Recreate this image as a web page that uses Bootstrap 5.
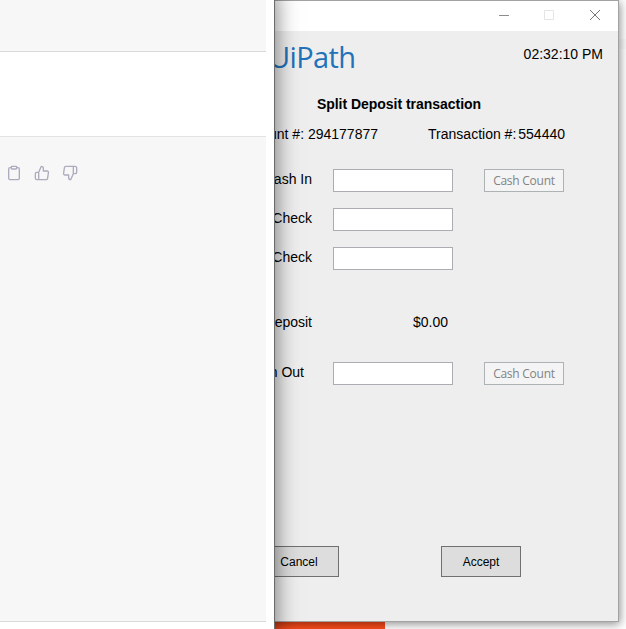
<!DOCTYPE html>
<html lang="en">
<head>
<meta charset="utf-8">
<meta name="viewport" content="width=device-width, initial-scale=1">
<title>UiPath - Split Deposit transaction</title>
<link href="https://cdn.jsdelivr.net/npm/bootstrap@5.3.0/dist/css/bootstrap.min.css" rel="stylesheet">
<style>
body{font:14px/20px "Liberation Sans",Arial,sans-serif;color:#000;background:#fff}
.desktop{width:626px;height:629px}
.desk-line{left:600px;top:39px;width:26px;height:10px;background:#fafafa}
.orange-strip{left:0;top:600px;width:385px;height:29px;background:#fc4c1b}
/* transaction window */
.teller{left:180px;top:0;width:439px;height:622px;border:1px solid #a2a2a2;background:#eee;box-shadow:1px 2px 9px rgba(0,0,0,.45)}
.title-strip{height:30px;padding:0 17px 2px 0;gap:33px}
.close-icon{margin-left:1px}
.brand{font:400 29px/38px "Open Sans","Noto Sans",sans-serif;color:#2272b9;letter-spacing:-.6px}
.head-row{height:53px;padding:7px 15px 0 0}
.head-row .brand{width:174.5px}
.clock{padding-top:6px}
.heading{height:40px;padding:10px 1px 0 0;letter-spacing:-.03px}
.acct-row{height:45px}
.acct-row .acct{width:197px}
.acct-row .trans{width:187px;gap:2px}
.field-row{height:23px}
.field-row+.field-row{margin-top:16px}
.lbl{width:131px;line-height:20px;margin-right:21px}
.lbl-out{width:123px;margin-right:29px}
.teller .form-control{width:120px;height:23px;padding:0;border:1px solid #abadb3;border-radius:0;background:#fff}
.count-btn,.count-btn:disabled{width:80px;height:23px;margin-left:31px;padding:0;border:1px solid #adb2b5;border-radius:0;background:#f4f4f4;color:#838383;opacity:1;font:12px/22px "Open Sans","Noto Sans",sans-serif;letter-spacing:-.25px}
.total-row{height:92px;padding-top:42px}
.total-row .amount{width:115px}
.actions{margin-top:161px;padding-left:78px;gap:102px}
.action-btn{width:80px;height:31px;padding:1px 0 0;border:1px solid #707070;border-radius:0;background:#ddd;color:#000;font:12px/28px "Liberation Sans",Arial,sans-serif}
/* chat window */
.chat{left:0;top:-10px;width:275px;height:650px;background:#fff;border-right:1px solid #6b6b6b;box-shadow:0 0 22px rgba(0,0,0,.55)}
.chat-inner{width:266px;padding-top:10px}
.tone{background:#f7f7f7}
.msg{border-bottom:1px solid #d9d9d9}
.m1{height:52px}.m2{height:85px;border-color:#e3e3e3}.m3{height:485px;padding:28px 0 0 6px;gap:12px}
</style>
<script src="https://cdn.jsdelivr.net/npm/bootstrap@5.3.0/dist/js/bootstrap.bundle.min.js"></script>
</head>
<body class="m-0 overflow-hidden">
<main class="desktop position-relative overflow-hidden">
  <div class="desk-line position-absolute"></div>
  <div class="orange-strip position-absolute"></div>

  <section class="teller position-absolute">
    <div class="title-strip d-flex align-items-center justify-content-end bg-white">
      <svg width="12" height="12" viewBox="0 0 12 12" fill="none" stroke="#8e8e8e"><path d="M1 6.500h10"/></svg>
      <svg width="12" height="12" viewBox="0 0 12 12" fill="none" stroke="#e5e5e5"><path d="M1.500 1.500h9v9h-9z"/></svg>
      <svg class="close-icon" width="12" height="12" viewBox="0 0 12 12" fill="none" stroke="#757575"><path d="M1 1l10 10M11 1L1 11"/></svg>
    </div>
    <div class="head-row d-flex justify-content-between">
      <div class="brand text-end text-nowrap">UiPath</div>
      <div class="clock">02:32:10 PM</div>
    </div>
    <div class="heading text-center fw-bold">Split Deposit transaction</div>
    <div class="acct-row d-flex text-nowrap">
      <div class="acct text-end">Account #: 294177877</div>
      <div class="trans d-flex justify-content-end"><span>Transaction #:</span><span>554440</span></div>
    </div>
    <div class="field-row d-flex">
      <label class="lbl text-end" for="cashIn">Cash In</label><input id="cashIn" class="form-control"><button class="btn count-btn" disabled>Cash Count</button>
    </div>
    <div class="field-row d-flex">
      <label class="lbl text-end" for="check1">Check</label><input id="check1" class="form-control">
    </div>
    <div class="field-row d-flex">
      <label class="lbl text-end" for="check2">Check</label><input id="check2" class="form-control">
    </div>
    <div class="total-row d-flex">
      <div class="lbl text-end">Total Deposit</div><div class="amount text-end">$0.00</div>
    </div>
    <div class="field-row d-flex">
      <label class="lbl lbl-out text-end" for="cashOut">Cash Out</label><input id="cashOut" class="form-control"><button class="btn count-btn" disabled>Cash Count</button>
    </div>
    <div class="actions d-flex">
      <button class="btn action-btn">Cancel</button>
      <button class="btn action-btn">Accept</button>
    </div>
  </section>

  <section class="chat position-absolute">
    <div class="chat-inner">
      <div class="msg m1 tone"></div>
      <div class="msg m2"></div>
      <div class="msg m3 tone d-flex align-items-start">
        <svg width="16" height="16" viewBox="0 0 24 24" fill="none" stroke="#acacbe" stroke-width="2" stroke-linecap="round" stroke-linejoin="round"><path d="M16 4h2a2 2 0 0 1 2 2v14a2 2 0 0 1-2 2H6a2 2 0 0 1-2-2V6a2 2 0 0 1 2-2h2"/><rect x="8" y="2" width="8" height="4" rx="1"/></svg>
        <svg width="16" height="16" viewBox="0 0 24 24" fill="none" stroke="#acacbe" stroke-width="2" stroke-linecap="round" stroke-linejoin="round"><path d="M14 9V5a3 3 0 0 0-3-3l-4 9v11h11.280a2 2 0 0 0 2-1.700l1.380-9a2 2 0 0 0-2-2.300zM7 22H4a2 2 0 0 1-2-2v-7a2 2 0 0 1 2-2h3"/></svg>
        <svg width="16" height="16" viewBox="0 0 24 24" fill="none" stroke="#acacbe" stroke-width="2" stroke-linecap="round" stroke-linejoin="round"><path d="M10 15v4a3 3 0 0 0 3 3l4-9V2H5.720a2 2 0 0 0-2 1.700l-1.380 9a2 2 0 0 0 2 2.300zm7-13h2.670A2.310 2.310 0 0 1 22 4v7a2.310 2.310 0 0 1-2.330 2H17"/></svg>
      </div>
    </div>
  </section>
</main>
</body>
</html>
